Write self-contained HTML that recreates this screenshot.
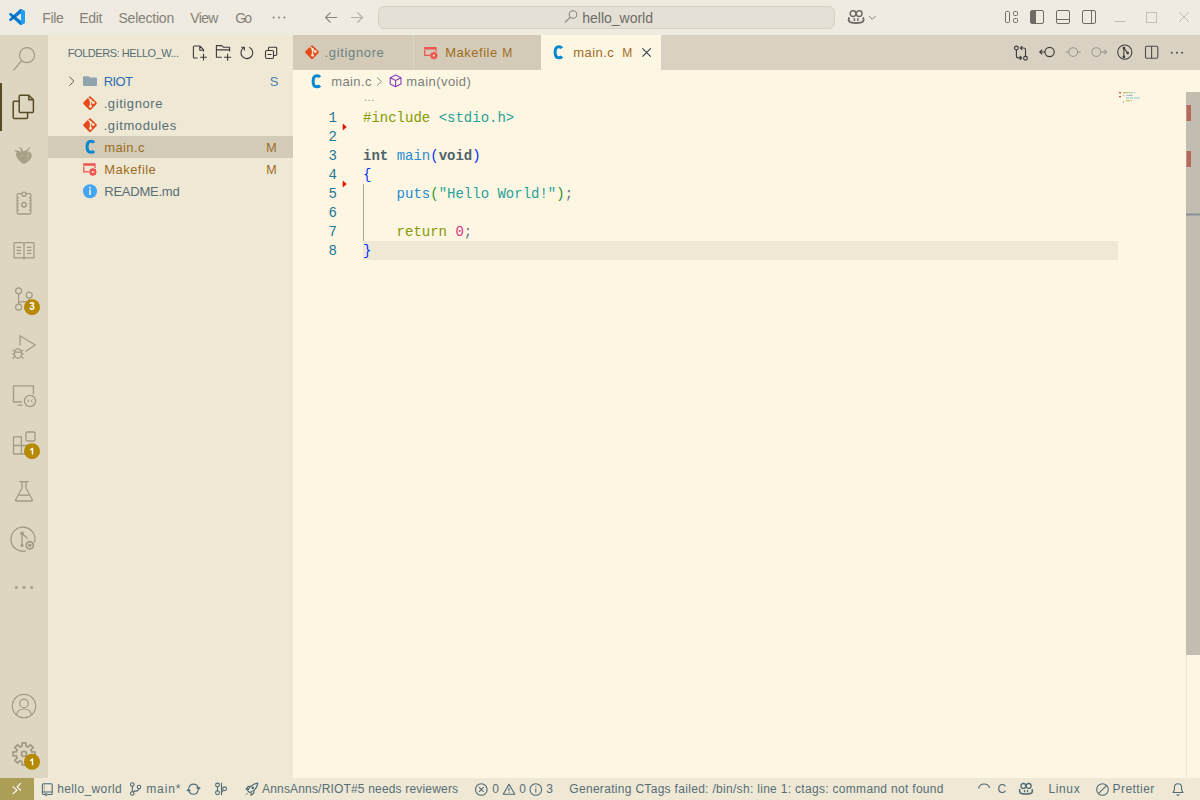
<!DOCTYPE html>
<html><head><meta charset="utf-8">
<style>
*{margin:0;padding:0;box-sizing:border-box}
html,body{width:1200px;height:800px;overflow:hidden;background:#FDF6E3;font-family:"Liberation Sans",sans-serif;}
.a{position:absolute;white-space:pre}
.r{position:absolute}
svg{position:absolute;overflow:visible}
.code{position:absolute;white-space:pre;font-family:"Liberation Mono",monospace;font-size:14px;line-height:19px}
.ln{color:#237893;text-align:right;width:30px;left:307px}
</style></head><body>
<div class="r" style="left:0;top:0;width:1200px;height:35px;background:#F0EBE0"></div>
<div class="r" style="left:0;top:35px;width:48px;height:743px;background:#DDD6C1"></div>
<div class="r" style="left:48px;top:35px;width:245px;height:743px;background:#EEE8D5"></div>
<div class="r" style="left:293px;top:35px;width:907px;height:35px;background:#D9D2C2"></div>
<div class="r" style="left:0;top:778px;width:1200px;height:22px;background:#EEE8D5"></div>

<!-- command center -->
<div class="r" style="left:378px;top:6px;width:457px;height:23px;border:1px solid #D6D1C3;border-radius:6px;background:#E4E0D5"></div>

<!-- explorer selection -->
<div class="r" style="left:48px;top:136px;width:245px;height:22px;background:#D1CBB8"></div>

<!-- tabs -->
<div class="r" style="left:293px;top:35px;width:120px;height:35px;background:#D3CBB7"></div>
<div class="r" style="left:413px;top:35px;width:1px;height:35px;background:#DDD6C1"></div>
<div class="r" style="left:414px;top:35px;width:127px;height:35px;background:#D3CBB7"></div>
<div class="r" style="left:541px;top:35px;width:120px;height:35px;background:#FDF6E3"></div>

<!-- code -->
<div class="a" style="left:363.6px;top:88.7px;line-height:16px;color:#8E9A9A;font-size:11.3px">…</div>
<div class="r" style="left:363px;top:241px;width:755px;height:19px;background:#EEE8D5"></div>
<div class="code ln" style="top:109px">1</div>
<div class="code ln" style="top:128px">2</div>
<div class="code ln" style="top:147px">3</div>
<div class="code ln" style="top:166px">4</div>
<div class="code ln" style="top:185px">5</div>
<div class="code ln" style="top:204px">6</div>
<div class="code ln" style="top:223px">7</div>
<div class="code ln" style="top:242px">8</div>
<div class="code" style="left:363px;top:109px"><span style="color:#859900">#include</span> <span style="color:#2AA198">&lt;stdio.h&gt;</span></div>
<div class="code" style="left:363px;top:147px"><b style="color:#50636B">int</b> <span style="color:#268BD2">main</span><span style="color:#0431FA">(</span><b style="color:#50636B">void</b><span style="color:#0431FA">)</span></div>
<div class="code" style="left:363px;top:166px;color:#0431FA">{</div>
<div class="code" style="left:363px;top:185px">    <span style="color:#268BD2">puts</span><span style="color:#319331">(</span><span style="color:#2AA198">"Hello World!"</span><span style="color:#319331">)</span><span style="color:#657B83">;</span></div>
<div class="code" style="left:363px;top:223px">    <span style="color:#859900">return</span> <span style="color:#D33682">0</span><span style="color:#657B83">;</span></div>
<div class="code" style="left:363px;top:242px;color:#0431FA">}</div>
<div class="r" style="left:363px;top:184px;width:1px;height:57px;background:#A8A49A"></div>

<!-- scrollbar -->
<div class="r" style="left:1186px;top:92px;width:14px;height:563px;background:#C2BDB0"></div>

<!-- status remote -->
<div class="r" style="left:0;top:778px;width:34px;height:22px;background:#AC9D57"></div>

<div class="a" id="File" style="left:42.3px;top:7px;line-height:22px;font-size:14px;color:#84817A;letter-spacing:-0.395px;">File</div>
<div class="a" id="Edit" style="left:79.3px;top:7px;line-height:22px;font-size:14px;color:#84817A;letter-spacing:-0.351px;">Edit</div>
<div class="a" id="Selection" style="left:118.51px;top:7px;line-height:22px;font-size:14px;color:#84817A;letter-spacing:-0.236px;">Selection</div>
<div class="a" id="View" style="left:190.28px;top:7px;line-height:22px;font-size:14px;color:#84817A;letter-spacing:-0.654px;">View</div>
<div class="a" id="Go" style="left:235.14px;top:7px;line-height:22px;font-size:14px;color:#84817A;letter-spacing:-1.82px;">Go</div>
<div class="a" id="title" style="left:582.3px;top:7px;line-height:22px;font-size:14px;color:#6F6C66;letter-spacing:-0.015px;">hello_world</div>
<div class="a" id="hdr" style="left:67.79px;top:42px;line-height:22px;font-size:11px;color:#586E75;letter-spacing:-0.447px;">FOLDERS: HELLO_W...</div>
<div class="a" id="RIOT" style="left:103.66px;top:71px;line-height:22px;font-size:13px;color:#2E6DB4;letter-spacing:-0.582px;">RIOT</div>
<div class="a" id="S" style="left:269.66px;top:71px;line-height:22px;font-size:13px;color:#4A7FB0;letter-spacing:-2.87px;">S</div>
<div class="a" id="gi" style="left:103.66px;top:93px;line-height:22px;font-size:13px;color:#586E75;letter-spacing:0.59px;">.gitignore</div>
<div class="a" id="gm" style="left:103.66px;top:115px;line-height:22px;font-size:13px;color:#586E75;letter-spacing:0.602px;">.gitmodules</div>
<div class="a" id="mc" style="left:104.22px;top:137px;line-height:22px;font-size:13px;color:#A06C22;letter-spacing:0.376px;">main.c</div>
<div class="a" id="M1" style="left:266.29px;top:137px;line-height:22px;font-size:12.5px;color:#A06C22;letter-spacing:4.62px;">M</div>
<div class="a" id="mk" style="left:104.22px;top:159px;line-height:22px;font-size:13px;color:#A06C22;letter-spacing:0.46px;">Makefile</div>
<div class="a" id="M2" style="left:266.29px;top:159px;line-height:22px;font-size:12.5px;color:#A06C22;letter-spacing:4.62px;">M</div>
<div class="a" id="rd" style="left:104.22px;top:181px;line-height:22px;font-size:13px;color:#586E75;letter-spacing:-0.225px;">README.md</div>
<div class="a" id="tgi" style="left:324.59px;top:42px;line-height:22px;font-size:13px;color:#6E8186;letter-spacing:0.644px;">.gitignore</div>
<div class="a" id="tmk" style="left:445.29px;top:42px;line-height:22px;font-size:13px;color:#A06C22;letter-spacing:0.5px;">Makefile</div>
<div class="a" id="tM1" style="left:502.29px;top:42px;line-height:22px;font-size:12px;color:#A06C22;letter-spacing:5.67px;">M</div>
<div class="a" id="tmc" style="left:573.29px;top:42px;line-height:22px;font-size:13px;color:#A06C22;letter-spacing:0.432px;">main.c</div>
<div class="a" id="tM2" style="left:622.15px;top:42px;line-height:22px;font-size:12px;color:#A06C22;letter-spacing:3.85px;">M</div>
<div class="a" id="bc1" style="left:331.29px;top:71px;line-height:22px;font-size:13px;color:#7C7F7A;letter-spacing:0.362px;">main.c</div>
<div class="a" id="bc2" style="left:406.29px;top:71px;line-height:22px;font-size:13px;color:#7C7F7A;letter-spacing:0.432px;">main(void)</div>
<div class="a" id="s1" style="left:57.15px;top:777.5px;line-height:22px;font-size:12px;color:#586E75;letter-spacing:0.394px;">hello_world</div>
<div class="a" id="s2" style="left:146.21px;top:777.5px;line-height:22px;font-size:12px;color:#586E75;letter-spacing:0.915px;">main*</div>
<div class="a" id="s3" style="left:262.0px;top:777.5px;line-height:22px;font-size:12px;color:#586E75;letter-spacing:0.177px;">AnnsAnns/RIOT#5 needs reviewers</div>
<div class="a" id="s4" style="left:492.21px;top:777.5px;line-height:22px;font-size:12px;color:#586E75;letter-spacing:-2.52px;">0</div>
<div class="a" id="s5" style="left:519.28px;top:777.5px;line-height:22px;font-size:12px;color:#586E75;letter-spacing:-2.38px;">0</div>
<div class="a" id="s6" style="left:546.21px;top:777.5px;line-height:22px;font-size:12px;color:#586E75;letter-spacing:-2.1px;">3</div>
<div class="a" id="s7" style="left:569.29px;top:777.5px;line-height:22px;font-size:12px;color:#586E75;letter-spacing:0.308px;">Generating CTags failed: /bin/sh: line 1: ctags: command not found</div>
<div class="a" id="s8" style="left:997.43px;top:777.5px;line-height:22px;font-size:12px;color:#586E75;letter-spacing:-2.87px;">C</div>
<div class="a" id="s9" style="left:1048.51px;top:777.5px;line-height:22px;font-size:12px;color:#586E75;letter-spacing:0.61px;">Linux</div>
<div class="a" id="s10" style="left:1112.51px;top:777.5px;line-height:22px;font-size:12px;color:#586E75;letter-spacing:0.44px;">Prettier</div>
<svg width="1200" height="800" style="left:0;top:0" viewBox="0 0 1200 800" fill="none">
<!-- VS Code logo -->
<g transform="translate(9,9) scale(0.16)">
<path fill="#0A7BD0" fill-rule="evenodd" d="M96.46 10.8 L75.86 0.9 C73.47 -0.25 70.62 0.24 68.75 2.1 L29.2 38.2 L11.97 25.1 C10.37 23.9 8.12 24 6.63 25.35 L1.12 30.36 C-0.7 32 -0.7 34.9 1.11 36.55 L16.05 50.16 L1.11 63.78 C-0.7 65.4 -0.7 68.3 1.12 69.96 L6.63 74.97 C8.12 76.33 10.37 76.42 11.97 75.21 L29.2 62.12 L68.75 98.2 C70.62 100.07 73.47 100.56 75.86 99.41 L96.46 89.5 C98.63 88.46 100 86.27 100 83.87 V16.45 C100 14.05 98.62 11.86 96.46 10.8 Z M75.02 27.3 L45.02 50.16 L75.02 73.02 Z"/>
<path fill="#0066B8" d="M29.2 38.2 L45.02 50.16 L29.2 62.12 L16.05 50.16 Z"/>
<path fill="#1FA0F2" d="M75.02 0.3 L96.46 10.8 C98.62 11.86 100 14.05 100 16.45 V83.87 C100 86.27 98.63 88.46 96.46 89.5 L75.86 99.41 C75.6 99.55 75.3 99.65 75.02 99.75 Z"/>
</g>
<!-- nav arrows -->
<g stroke="#8A867E" stroke-width="1.1">
<path d="M325.5 17.5 H337 M330.5 12.5 L325.5 17.5 L330.5 22.5"/>
</g>
<g stroke="#B3AFA6" stroke-width="1.1">
<path d="M351 17.5 H362.5 M357.5 12.5 L362.5 17.5 L357.5 22.5"/>
</g>
<!-- search in command center -->
<g stroke="#8A867E" stroke-width="1.1"><circle cx="573" cy="14.5" r="3.8"/><path d="M570.3 17.2 L565 22.5"/></g>
<!-- copilot -->
<g transform="translate(848,10.1) scale(1.16)" stroke="#6E6B66">
<rect x="1.9" y="0.6" width="4.9" height="4.9" rx="2.3" stroke-width="1.3"/>
<rect x="7.2" y="0.6" width="4.9" height="4.9" rx="2.3" stroke-width="1.3"/>
<path d="M1 6.2 C0.5 7.2 0.5 9 1.2 9.9 C3 11.5 11 11.5 12.8 9.9 C13.5 9 13.5 7.2 13 6.2" stroke-width="1.6"/>
<path d="M5.5 7 V9.3 M8.5 7 V9.3" stroke-width="1.3"/>
</g>
<path d="M869 16 L872.3 19.3 L875.6 16" stroke="#8A867E" stroke-width="1"/>
<!-- layout icons -->
<g stroke="#6F6C66" stroke-width="1">
<rect x="1005.5" y="11.5" width="4" height="11" rx="1"/>
<rect x="1013.5" y="11.5" width="4" height="4" rx="1"/><rect x="1013.5" y="18.5" width="4" height="4" rx="1"/>
<rect x="1030.5" y="10.5" width="13" height="13" rx="1.5"/>
<rect x="1056.5" y="10.5" width="13" height="13" rx="1.5"/><path d="M1057 19.5 H1069"/>
<rect x="1082.5" y="10.5" width="13" height="13" rx="1.5"/><path d="M1091.5 11 V23"/>
</g>
<rect x="1031" y="11" width="5" height="12" fill="#6F6C66"/>
<g stroke="#C2BFB6" stroke-width="1">
<path d="M1114.5 21.5 H1125.5"/>
<rect x="1146.5" y="12.5" width="10" height="10"/>
<path d="M1179 12 L1189 22 M1189 12 L1179 22"/>
</g>

<!-- activity bar -->
<rect x="0" y="83" width="2" height="48" fill="#584C27"/>
<g stroke="#A39A82" stroke-width="1.2">
<circle cx="27" cy="55.2" r="7.5"/><path d="M21.7 60.5 L13.5 70.3"/>
</g>
<g stroke="#584C27" stroke-width="1.5" stroke-linejoin="round">
<path d="M19.2 101.2 H14.2 C13.6 101.2 13.2 101.6 13.2 102.2 V117.5 C13.2 118 13.6 118.4 14.2 118.4 H26.6 C27.2 118.4 27.6 118 27.6 117.5 V112.5"/>
<path d="M20.2 95.2 H28.8 L33.4 99.8 V111.4 C33.4 112 33 112.4 32.4 112.4 H20.2 C19.6 112.4 19.2 112 19.2 111.4 V96.2 C19.2 95.6 19.6 95.2 20.2 95.2 Z"/>
<path d="M28.8 95.2 V99.8 H33.4"/>
</g>
<!-- raspberry -->
<g fill="#A89F87">
<path d="M16 154 C16 152.4 17.4 151.4 19.2 151.6 L27 151.6 C29.6 151.1 31.8 152.6 31.8 155.6 C31.8 158.6 28.6 162.2 25 163.5 C24 163.9 23 163.8 22.3 163.2 C19 160.6 16 157.4 16 154 Z"/>
<path d="M14.2 150.2 C16.8 150.2 19.5 150.8 21.6 152.4 C19.2 153.2 16.5 152.6 14.2 150.2 Z"/>
<path d="M18.3 147 C20.8 147.2 23 148.8 23.3 151.8 L21.4 152.4 C21.2 150.2 20.2 148.4 18.3 147 Z"/>
<path d="M29.9 146.2 C30 149.4 28 151.6 23.6 152.8 L23.2 151.4 C26.4 150.4 28.6 148.8 29.9 146.2 Z"/>
</g>
<path d="M27.8 152.2 C28.6 154.5 28.4 157.5 27 160" stroke="#DDD6C1" stroke-width="0.7" opacity="0.6"/>
<path d="M19.5 156.5 C21 155.8 22.6 156 24 155.2" stroke="#DDD6C1" stroke-width="0.6" opacity="0.5"/>
<!-- board -->
<g stroke="#A39A82" stroke-width="1.3">
<rect x="17.2" y="193.6" width="13.6" height="20.4" rx="1"/>
<circle cx="24" cy="204.8" r="2.2" stroke-width="1.5"/>
<circle cx="24" cy="194.2" r="2.1" fill="#DDD6C1" stroke-width="1.4"/>
<path d="M17.2 197.8 H19.2 M17.2 200.8 H18.8 M17.2 203.8 H19.2 M17.2 206.8 H18.8 M17.2 209.8 H19.2 M28.8 197.8 H30.8 M29.2 200.8 H30.8 M28.8 203.8 H30.8 M29.2 206.8 H30.8 M28.8 209.8 H30.8"/>
</g>
<!-- book -->
<g stroke="#A39A82" stroke-width="1.2">
<path d="M14 242.6 H22.5 C23.4 242.6 24 243.2 24 244.1 V259.8 M14 242.6 V257.8 H24 M34 242.6 H25.5 C24.6 242.6 24 243.2 24 244.1 M34 242.6 V257.8 H24"/>
<path d="M16.6 247.4 H21 M16.6 250.4 H21 M16.6 253.4 H21 M27 247.4 H31.4 M27 250.4 H31.4 M27 253.4 H31.4"/>
</g>
<!-- source control -->
<g stroke="#A39A82" stroke-width="1.2">
<circle cx="18.6" cy="290.8" r="3"/><circle cx="29.2" cy="295.2" r="3"/><circle cx="18.6" cy="307.2" r="3"/>
<path d="M18.6 293.8 V304.2 M18.6 303 C19.5 301.8 21 301.6 23 301.6 H26 C28 301.6 29.2 300.5 29.2 298.2"/>
</g>
<!-- run debug -->
<g stroke="#A39A82" stroke-width="1.3">
<path d="M20 345.5 V335.8 L35.2 345 L25.5 351.5"/>
<ellipse cx="18" cy="353.5" rx="3.6" ry="4.6"/>
<path d="M14.4 352.2 H21.6 M12.5 350 L14.4 351 M23.5 350 L21.6 351 M12.5 354 H14.4 M21.6 354 H23.5 M12.5 358.4 L14.6 356.6 M23.5 358.4 L21.4 356.6 M15.8 348.6 L16.6 349.6 M20.2 348.6 L19.4 349.6"/>
</g>
<!-- remote -->
<g stroke="#A39A82" stroke-width="1.3">
<path d="M22 402 H13.5 V385.8 H33.4 V394.5"/>
<path d="M17.5 405.3 H22.5"/>
<circle cx="30" cy="401" r="5.6"/>
<path d="M27.3 399.5 L28.8 401 L27.3 402.5 M32.6 399.5 L31.1 401 L32.6 402.5" stroke-width="1"/>
</g>
<!-- extensions -->
<g stroke="#A39A82" stroke-width="1.3">
<path d="M13.5 437.5 C13.5 437 13.8 436.8 14.2 436.8 H21.4 V454 H14.2 C13.8 454 13.5 453.7 13.5 453.3 Z M13.5 445.5 H29.5 V454 H21.4"/>
<rect x="26" y="432" width="9" height="9" rx="1.2"/>
</g>
<!-- flask -->
<g stroke="#A39A82" stroke-width="1.3" stroke-linejoin="round">
<path d="M19.2 481.6 H28.8 M22 481.6 V488 L15.6 500 C15.4 500.6 15.7 501 16.3 501 H31.7 C32.3 501 32.6 500.6 32.4 500 L26 488 V481.6"/>
<path d="M18.6 495.2 H29.4"/>
</g>
<!-- git graph -->
<g stroke="#A39A82" stroke-width="1.3">
<path d="M34.5 542.5 A12 12 0 1 0 26 550.8"/>
<path d="M22 533.5 V545.5 M22 533.5 L27.6 538.6"/>
<circle cx="29.8" cy="545.2" r="3.6" stroke-width="1.8"/>
</g>
<g fill="#A39A82">
<circle cx="22" cy="533.3" r="1.8"/><circle cx="22" cy="545.5" r="1.6"/><circle cx="29.8" cy="545.2" r="1.7"/>
<circle cx="16.4" cy="587.4" r="1.5"/><circle cx="24" cy="587.4" r="1.5"/><circle cx="31.6" cy="587.4" r="1.5"/>
</g>
<!-- accounts -->
<g stroke="#A39A82" stroke-width="1.2">
<circle cx="24" cy="706" r="11.7"/>
<circle cx="24" cy="703.4" r="4.3"/>
<path d="M16.5 714.8 C17.5 710.8 20.5 709 24 709 C27.5 709 30.5 710.8 31.5 714.8"/>
</g>
<!-- gear -->
<g stroke="#A39A82" stroke-width="1.7">
<path id="gear" stroke-linejoin="round" d="M20.98 746.60 L22.09 746.23 L21.96 742.89 L26.04 742.89 L25.91 746.23 L27.02 746.60 L28.07 747.13 L30.34 744.67 L33.23 747.56 L30.77 749.83 L31.30 750.88 L31.67 751.99 L35.01 751.86 L35.01 755.94 L31.67 755.81 L31.30 756.92 L30.77 757.97 L33.23 760.24 L30.34 763.13 L28.07 760.67 L27.02 761.20 L25.91 761.57 L26.04 764.91 L21.96 764.91 L22.09 761.57 L20.98 761.20 L19.93 760.67 L17.66 763.13 L14.77 760.24 L17.23 757.97 L16.70 756.92 L16.33 755.81 L12.99 755.94 L12.99 751.86 L16.33 751.99 L16.70 750.88 L17.23 749.83 L14.77 747.56 L17.66 744.67 L19.93 747.13 Z"/>
<circle cx="24" cy="753.9" r="2.6"/>
</g>
<!-- badges -->
<g fill="#B58900">
<circle cx="32" cy="307.2" r="8"/><circle cx="32" cy="451.2" r="8"/><circle cx="32" cy="761.8" r="8"/>
</g>
</svg>
<svg width="1200" height="800" style="left:0;top:0" viewBox="0 0 1200 800" fill="none">
<!-- explorer header actions -->
<g stroke="#3E3A3A" stroke-width="1.1" stroke-linejoin="round">
<path d="M197.6 58 H194.4 C193.8 58 193.4 57.6 193.4 57 V47 C193.4 46.4 193.8 46 194.4 46 H199.8 L203.5 49.7 V51.6 M199.8 46 V50.3 H203.5"/>
<path d="M200.2 57.3 H206.8 M203.5 53.8 V60.6"/>
<path d="M221.8 57.2 H216.4 V45.6 H221.7 L223.3 47.2 H229.6 V51.5 M216.4 49.9 H229.6"/>
<path d="M224.1 57.2 H231.2 M227.6 53.7 V60.8"/>
<path d="M249.2 47.3 A5.9 5.9 0 1 1 243.9 47.6"/>
<path d="M241.2 47.2 H244.4 V50.5"/>
<rect x="265.5" y="50.5" width="8" height="8" rx="1.2"/>
<path d="M268.5 50.5 V48.2 C268.5 47.7 268.9 47.3 269.4 47.3 H275.8 C276.3 47.3 276.7 47.7 276.7 48.2 V54.6 C276.7 55.1 276.3 55.5 275.8 55.5 H273.5 M267.5 54.5 H271.5"/>
</g>
<!-- tree chevron -->
<path d="M69.3 76.7 L74 81.2 L69.3 85.7" stroke="#5E5C57" stroke-width="1"/>
<!-- folder -->
<path fill="#90A4AE" d="M83 77.2 C83 76.7 83.4 76.3 83.9 76.3 H88.5 L90 77.5 H96.1 C96.6 77.5 97 77.9 97 78.4 V85.1 C97 85.6 96.6 86 96.1 86 H83.9 C83.4 86 83 85.6 83 85.1 Z"/>
<!-- git icons -->
<g id="git">
<rect x="84.75" y="97.95" width="10.5" height="10.5" rx="1.6" fill="#E64A19" transform="rotate(45 90 103.2)"/>
<path stroke="#EEE8D5" stroke-width="1.3" d="M88.2 97.6 L90.5 99.9 V106 M90.5 99.9 L93.2 102.6"/>
<circle cx="90.5" cy="100.1" r="1.2" fill="#EEE8D5"/><circle cx="90.5" cy="106.4" r="1.4" fill="#EEE8D5"/><circle cx="93.3" cy="102.7" r="1.4" fill="#EEE8D5"/>
</g>
<use href="#git" transform="translate(0,22)"/>
<!-- C icon -->
<path id="cicon" d="M94 142.6 C93.2 141.6 92 141.3 90.9 141.3 C88.3 141.3 87.1 143.6 87.1 146.8 C87.1 150 88.3 152.3 90.9 152.3 C92 152.3 93.2 152 94 151" stroke="#0288D1" stroke-width="3"/>
<!-- makefile icon -->
<g id="mkicon">
<path d="M83.8 166.5 V171.8 H88.8" stroke="#EF5350" stroke-width="1.3"/>
<path d="M83.1 165.2 V164 C83.1 163.6 83.4 163.3 83.8 163.3 H95 C95.4 163.3 95.7 163.6 95.7 164 V165.8 H83.1 Z" fill="#EF5350"/>
<path d="M95 166 V168.2" stroke="#EF5350" stroke-width="1.3"/>
<circle cx="92.8" cy="172" r="2.6" stroke="#EF5350" stroke-width="1.6"/>
<path d="M92.8 168 V176 M88.8 172 H96.8 M90 169.2 L95.6 174.8 M95.6 169.2 L90 174.8" stroke="#EF5350" stroke-width="1.2"/>
<circle cx="92.8" cy="172" r="1.1" fill="#EEE8D5"/>
</g>
<!-- info icon -->
<circle cx="90" cy="191.3" r="7" fill="#42A5F5"/>
<rect x="89.1" y="186.8" width="1.8" height="1.8" fill="#EEE8D5"/><rect x="89.1" y="189.6" width="1.8" height="5.4" fill="#EEE8D5"/>

<!-- tab icons -->
<g transform="translate(222,-51)"><use href="#git"/></g>
<use href="#mkicon" transform="translate(341,-116.4)"/>
<use href="#cicon" transform="translate(468,-94.5)"/>
<path d="M642.4 48.3 L650.8 56.7 M650.8 48.3 L642.4 56.7" stroke="#34474E" stroke-width="1.2"/>
<!-- breadcrumb icons -->
<use href="#cicon" transform="translate(226,-65.5)"/>
<path d="M377 77.5 L381.5 81.5 L377 85.5" stroke="#8F918C" stroke-width="1"/>
<g stroke="#8B3FBF" stroke-width="1.1" stroke-linejoin="round">
<path d="M395.6 75 L401 77.8 V84 L395.6 86.8 L390.2 84 V77.8 Z M390.2 77.8 L395.6 80.6 L401 77.8 M395.6 80.6 V86.8"/>
</g>

<!-- editor actions -->
<g stroke="#3F3D3A" stroke-width="1.15">
<circle cx="1016.4" cy="48" r="1.9"/><circle cx="1025.5" cy="58.2" r="1.9"/>
<path d="M1016.4 49.9 V56.2 C1016.4 57.3 1017 57.9 1018.1 57.9 H1021.6 M1019.8 56 L1021.7 57.9 L1019.8 59.8"/>
<path d="M1025.5 56.3 V49.7 C1025.5 48.6 1024.9 48 1023.8 48 H1020.4 M1022.3 46.1 L1020.4 48 L1022.3 49.9"/>
<circle cx="1049.6" cy="52" r="4.6"/>
<path d="M1045 52 H1039.8 M1042.2 49.6 L1039.8 52 L1042.2 54.4"/>
</g>
<g stroke="#9C9A92" stroke-width="1.1">
<circle cx="1073.2" cy="52.1" r="4.4"/><path d="M1068.8 52.1 H1066 M1077.6 52.1 H1080.6"/>
<circle cx="1096.3" cy="52.1" r="4.4"/><path d="M1100.7 52.1 H1106.6 M1104.3 49.8 L1106.6 52.1 L1104.3 54.4"/>
</g>
<g stroke="#3C3B38" stroke-width="1.05">
<circle cx="1124.8" cy="52.1" r="7.1"/>
<path d="M1123.9 48.1 V56.8 M1123.9 48.1 L1127.7 53"/>
</g>
<g fill="#3C3B38"><circle cx="1123.9" cy="48.1" r="1.35"/><circle cx="1123.9" cy="56.8" r="1.35"/><circle cx="1127.7" cy="53" r="1.35"/></g>
<g stroke="#4E4D4A" stroke-width="1.1">
<rect x="1145.5" y="46.2" width="12.3" height="12" rx="1.2"/><path d="M1151.6 46.2 V58.2"/>
</g>
<g fill="#4E4D4A"><circle cx="1171.8" cy="52.8" r="1.05"/><circle cx="1177" cy="52.8" r="1.05"/><circle cx="1182.1" cy="52.8" r="1.05"/></g>

<!-- gutter deleted markers -->
<path d="M342.7 123.5 L346.8 127 L342.7 130.5 Z M342.7 180.5 L346.8 184 L342.7 187.5 Z" fill="#E51400"/>
<!-- scrollbar markers -->
<rect x="1186.5" y="105" width="4.5" height="16" fill="#B8695E"/>
<rect x="1186.5" y="151" width="4.5" height="16" fill="#B8695E"/>
<rect x="1186" y="213.5" width="14" height="2" fill="#8A9197"/>
<!-- minimap -->
<g opacity="0.75">
<rect x="1119" y="92" width="2" height="1.3" fill="#E51400"/><rect x="1119" y="96" width="2" height="1.3" fill="#E51400"/>
<rect x="1123" y="92" width="5.8" height="1.2" fill="#A8B53A"/><rect x="1129.3" y="92" width="3.7" height="1.2" fill="#7FC8BE"/><rect x="1134" y="92" width="1.2" height="1.2" fill="#5DB8AC"/>
<rect x="1123" y="94.6" width="1.3" height="1.6" fill="#B8B8B0"/><rect x="1126" y="94.8" width="3" height="1.2" fill="#8EBFE5"/><rect x="1129" y="94.8" width="3.6" height="1.2" fill="#A0A09A"/>
<rect x="1126" y="97.2" width="3" height="1.4" fill="#8EBFE5"/><rect x="1129.9" y="97.2" width="3.1" height="1.4" fill="#7FC8BE"/><rect x="1134" y="97.2" width="5.6" height="1.4" fill="#8FD0C6"/>
<rect x="1126" y="100" width="4" height="1.2" fill="#A8B53A"/><rect x="1130.5" y="100" width="1.5" height="1.2" fill="#E9A8CB"/>
<rect x="1123" y="101" width="1.2" height="2" fill="#B8B8B0"/>
</g>
</svg>
<svg width="1200" height="800" style="left:0;top:0" viewBox="0 0 1200 800" fill="none">
<!-- remote -->
<path d="M12.6 786.4 L17 790.2 L12.6 794.2 M20.9 783.2 L17.1 786.8 L20.9 790.5" stroke="#FFFFFF" stroke-width="1.1"/>
<g stroke="#4F6A75" stroke-width="1.1" stroke-linejoin="round">
<!-- repo -->
<path d="M45 794.5 H43.5 C42.8 794.5 42.4 794 42.4 793.3 V784.8 C42.4 784.1 42.9 783.7 43.6 783.7 H51.2 C51.8 783.7 52.2 784.1 52.2 784.7 V793.5 C52.2 794.1 51.8 794.5 51.2 794.5 H47.5 M42.5 792 H52"/>
<path d="M44.3 784.5 V791.5" stroke-width="0.8" stroke-dasharray="1 1"/>
<path d="M45.3 793 V795.6 L46.1 795 L46.9 795.6 V793" stroke-width="0.9"/>
<!-- branch -->
<circle cx="132.3" cy="784.6" r="1.8"/><circle cx="132.3" cy="793.5" r="1.8"/><circle cx="139" cy="787" r="1.8"/>
<path d="M132.3 786.4 V791.7 M139 788.8 C139 791 136.5 791.2 132.5 791.5"/>
<!-- sync -->
<path d="M188.8 788.2 C189.3 785.7 191.2 784.1 193.5 784.1 C195.8 784.1 197.8 785.8 198.3 788.2 M198.2 790.2 C197.7 792.6 195.8 794.3 193.5 794.3 C191.2 794.3 189.2 792.6 188.7 790.2"/>
<path d="M196.6 787.6 L198.4 790 L200.2 787.6 Z M186.8 790.8 L188.6 788.4 L190.4 790.8 Z" fill="#4F6A75" stroke-width="0.6"/>
<!-- git compare-ish -->
<circle cx="217.5" cy="785" r="1.9"/><circle cx="217.5" cy="792.8" r="1.9"/><circle cx="224.6" cy="788.8" r="1.9"/>
<path d="M217.5 786.9 V790.9 M221.5 782.8 V795.2 M223.2 790.3 C222.8 791.5 222.2 792.2 221.5 792.6"/>
<!-- rocket -->
<path d="M249.3 792.4 L247.6 790.7 C249.4 786.8 253 783.9 257.8 783.1 C257 787.9 254.1 791.3 249.3 792.4 Z"/>
<path d="M248.4 789 L246 789.4 L248 786.6 L251.4 786.3 M251.2 792 L251 795.4 L253.6 793.3 L254.2 790"/>
<circle cx="252.8" cy="787.8" r="0.8" fill="#4F6A75"/>
<path d="M247.6 793.2 L246 794.8" stroke-width="1"/>
<!-- error -->
<circle cx="481.3" cy="789.5" r="5.8"/><path d="M479 787.2 L483.6 791.8 M483.6 787.2 L479 791.8"/>
<!-- warning -->
<path d="M509 784.3 L514.8 794.2 H503.2 Z"/><path d="M509 787.8 V791.2 M509 792.2 V793" />
<!-- info -->
<circle cx="535.8" cy="789.5" r="5.8"/><path d="M535.8 788.5 V792.5 M535.8 786.2 V787.2"/>
<!-- spinner -->
<path d="M978.5 788.5 C979.2 785.6 981.6 784 984.2 784 C986.7 784 988.8 785.5 989.6 787.8"/>
<!-- copilot -->
<g id="cop" transform="translate(1019,782.9)">
<rect x="1.9" y="0.6" width="4.9" height="4.9" rx="2.3" stroke-width="1.3"/>
<rect x="7.2" y="0.6" width="4.9" height="4.9" rx="2.3" stroke-width="1.3"/>
<path d="M1 6.2 C0.5 7.2 0.5 9 1.2 9.9 C3 11.5 11 11.5 12.8 9.9 C13.5 9 13.5 7.2 13 6.2" stroke-width="1.6"/>
<path d="M5.5 7 V9.3 M8.5 7 V9.3" stroke-width="1.3"/>
</g>
<!-- prettier no -->
<circle cx="1102.5" cy="789.5" r="5.8"/><path d="M1098.4 793.6 L1106.6 785.4"/>
<!-- bell -->
<path d="M1173 792.5 H1183 C1182 791.3 1181.6 790.2 1181.6 788.7 V787.5 C1181.6 785.4 1180 783.8 1178 783.8 C1176 783.8 1174.4 785.4 1174.4 787.5 V788.7 C1174.4 790.2 1174 791.3 1173 792.5 Z M1176.7 794.4 C1177 795.1 1177.5 795.4 1178 795.4 C1178.5 795.4 1179 795.1 1179.3 794.4"/>
</g>
<!-- menu dots -->
<g fill="#84817A"><circle cx="273.6" cy="17.6" r="1"/><circle cx="279" cy="17.6" r="1"/><circle cx="284.4" cy="17.6" r="1"/></g>
<rect x="1186" y="655" width="1" height="123" fill="#EFE7D4"/>
</svg>

<svg width="1200" height="800" style="left:0;top:0" viewBox="0 0 1200 800" fill="none">
<path d="M32.5 765.2 V759 L30.2 760.8" stroke="#fff" stroke-width="1.4" stroke-linejoin="round"/>
<path d="M32.5 454.6 V448.4 L30.2 450.2" stroke="#fff" stroke-width="1.4" stroke-linejoin="round"/>
</svg>
<div class="a" style="left:24px;top:299px;width:16px;text-align:center;line-height:16px;font-size:10px;font-weight:bold;color:#fff">3</div>
</body></html>
